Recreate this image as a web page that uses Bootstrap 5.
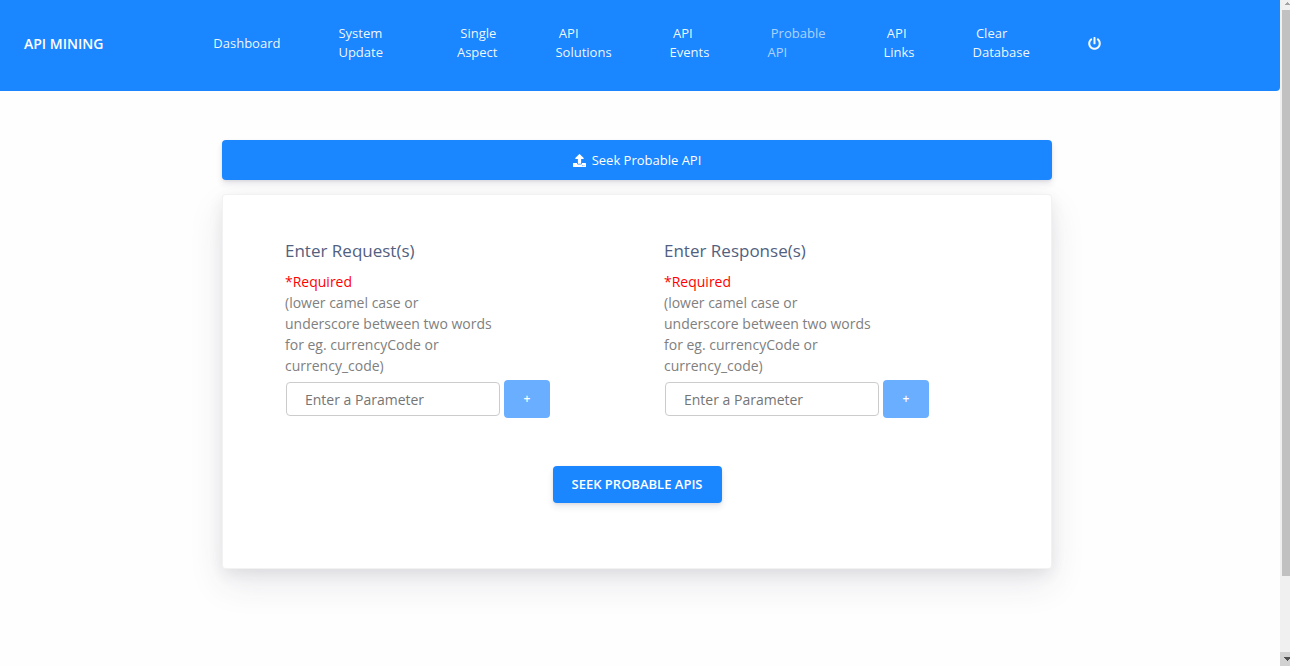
<!DOCTYPE html>
<html lang="en">
<head>
<meta charset="utf-8">
<meta name="viewport" content="width=device-width, initial-scale=1">
<title>API Mining</title>
<link href="https://cdn.jsdelivr.net/npm/bootstrap@5.3.0/dist/css/bootstrap.min.css" rel="stylesheet">
<style>
  :root { --brand-blue: #1a86ff; }
  body { font-family: "Open Sans", sans-serif; font-size: 14px; line-height: 21px; color: #808080; background: #fefefe; }
  .top-nav { --bs-navbar-nav-link-padding-x: 0; background: var(--brand-blue); border-bottom-right-radius: 4px; padding: 24px 24px 29px; }
  .top-nav .navbar-brand { font-size: 14px; line-height: 21px; font-weight: 600; color: #fff; margin-right: 110px; padding: 0; }
  .top-nav .navbar-nav { gap: 58px; }
  .top-nav .navbar-nav .nav-link { font-size: 13px; line-height: 19px; color: rgba(255,255,255,.95); padding: 0; white-space: nowrap; }
  .top-nav .navbar-nav .nav-link.active { color: rgba(255,255,255,.65); }
  .page-body { padding: 49px 6px 40px 0; }
  .panel-width { max-width: 830px; }
  .seek-tab { background: var(--brand-blue); color: #fff; font-size: 13px; line-height: 18px; padding: 11px; border-radius: 4px; gap: 6px; box-shadow: 0 4px 6px rgba(50,50,93,.11), 0 1px 3px rgba(0,0,0,.08); }
  .seek-tab:hover { color: #fff; }
  .form-panel { margin-top: 14px; padding: 43px 62px 65px; background: #fff; border: 1px solid rgba(0,0,0,.05); border-radius: 4px; box-shadow: 0 15px 35px rgba(50,50,93,.1), 0 5px 15px rgba(0,0,0,.07); }
  .param-grid { display: grid; grid-template-columns: repeat(2, minmax(0, 1fr)); column-gap: 54px; }
  .param-grid h2 { font-size: 17px; line-height: 26px; font-weight: 400; color: #525f7f; margin-bottom: 7px; }
  .param-hint { max-width: 216px; }
  .required-note { color: #f00; }
  .param-row { gap: 4px; margin: 4px 0 0 1px; }
  .param-row .form-control { width: 214px; height: 34px; font-size: 14px; padding: 4px 18px; border: 1px solid #ccc; border-radius: 4px; }
  .param-row .form-control::placeholder { color: #757575; }
  .add-btn { width: 46px; height: 38px; padding: 0; font-size: 12px; font-weight: 600; border: 0; border-radius: 4px; }
  .add-btn:disabled { background: #6aaeff; color: #fff; opacity: 1; }
  .submit-btn { margin-top: 48px; padding: 9px 19px; background: var(--brand-blue); color: #fff; font-size: 13px; line-height: 19px; font-weight: 600; border: 0; border-radius: 4px; box-shadow: 0 4px 6px rgba(50,50,93,.11), 0 1px 3px rgba(0,0,0,.08); }
  .scroll-strip { width: 10px; background: #f0f0f0; overflow: hidden; }
  .scroll-thumb { flex: 0 0 85%; margin-left: 2px; background: #c1c1c1; }
  .scroll-end { height: 14px; background: #d2d2d2; }
  .scroll-strip svg { display: block; }
</style>
</head>
<body>
<div class="d-flex vh-100 overflow-hidden">
  <div class="flex-grow-1">
    <nav class="navbar navbar-expand top-nav" aria-label="Main">
      <a class="navbar-brand" href="#">API MINING</a>
      <ul class="navbar-nav align-items-center">
        <li><a class="nav-link" href="#">Dashboard</a></li>
        <li class="me-3"><a class="nav-link" href="#">System<br>Update</a></li>
        <li><a class="nav-link" href="#">&nbsp;Single<br>Aspect</a></li>
        <li><a class="nav-link" href="#">&nbsp;API<br>Solutions</a></li>
        <li><a class="nav-link" href="#">&nbsp;API<br>Events</a></li>
        <li><a class="nav-link active" href="#" aria-current="page">&nbsp;Probable<br>API</a></li>
        <li><a class="nav-link" href="#">&nbsp;API<br>Links</a></li>
        <li><a class="nav-link" href="#">&nbsp;Clear<br>Database</a></li>
        <li><a class="nav-link d-flex" href="#" aria-label="Log out"><svg width="13" height="13" viewBox="0 0 512 512" fill="currentColor" aria-hidden="true"><path d="M400 54.1c63 45 104 118.6 104 201.9 0 136.8-110.8 247.7-247.5 248C120 504.3 8.2 393 8 256.4 7.9 173.1 48.9 99.3 111.8 54.2c11.7-8.3 28-4.8 35 7.7L162.6 90c5.9 10.5 3.1 23.8-6.6 31-41.5 30.8-68 79.6-68 134.9-.1 92.3 74.5 168.1 168 168.1 91.6 0 168.6-74.2 168-169.1-.3-51.8-24.7-101.8-68.1-134-9.7-7.2-12.4-20.5-6.5-30.9l15.8-28.1c7-12.4 23.2-16.1 34.800-7.800zM296 264V24c0-13.300-10.700-24-24-24h-32c-13.300 0-24 10.700-24 24v240c0 13.300 10.700 24 24 24h32c13.300 0 24-10.700 24-24z"/></svg></a></li>
      </ul>
    </nav>

    <main class="page-body">
      <div class="panel-width mx-auto">
        <a class="seek-tab d-flex justify-content-center align-items-center text-decoration-none" href="#seek">
          <svg width="13" height="13" viewBox="0 0 512 512" fill="currentColor" aria-hidden="true"><path d="M296 384h-80c-13.300 0-24-10.700-24-24V192h-87.700c-17.800 0-26.700-21.500-14.100-34.100L242.300 5.700c7.500-7.500 19.800-7.500 27.300 0l152.200 152.200c12.600 12.600 3.700 34.100-14.100 34.100H320v168c0 13.300-10.700 24-24 24zm216-8v112c0 13.300-10.700 24-24 24H24c-13.300 0-24-10.700-24-24V376c0-13.300 10.700-24 24-24h136v8c0 30.900 25.100 56 56 56h80c30.900 0 56-25.100 56-56v-8h136c13.300 0 24 10.700 24 24zm-124 88c0-11-9-20-20-20s-20 9-20 20 9 20 20 20 20-9 20-20zm64 0c0-11-9-20-20-20s-20 9-20 20 9 20 20 20 20-9 20-20z"/></svg>
          Seek Probable API
        </a>
        <form id="seek" class="form-panel">
          <div class="param-grid">
            <section>
              <h2><label for="request">Enter Request(s)</label></h2>
              <div class="param-hint"><span class="required-note">*Required</span><br>(lower camel case or<br>underscore between two words for eg. currencyCode or currency_code)</div>
              <div class="param-row d-flex align-items-center">
                <input type="text" class="form-control" id="request" placeholder="Enter a Parameter">
                <button type="button" class="btn add-btn" disabled>+</button>
              </div>
            </section>
            <section>
              <h2><label for="response">Enter Response(s)</label></h2>
              <div class="param-hint"><span class="required-note">*Required</span><br>(lower camel case or<br>underscore between two words for eg. currencyCode or currency_code)</div>
              <div class="param-row d-flex align-items-center">
                <input type="text" class="form-control" id="response" placeholder="Enter a Parameter">
                <button type="button" class="btn add-btn" disabled>+</button>
              </div>
            </section>
          </div>
          <div class="text-center">
            <button type="button" class="btn submit-btn">SEEK PROBABLE APIS</button>
          </div>
        </form>
      </div>
    </main>
  </div>

  <div class="scroll-strip d-flex flex-column flex-shrink-0" aria-hidden="true">
    <svg width="10" height="10"><path d="M4 5h1V4h1V3h1V2h1v1h1v1h1v1z" fill="#a3a3a3"/></svg>
    <div class="scroll-thumb"></div>
    <div class="scroll-end mt-auto"><svg width="10" height="14"><path d="M4 5h6v2H9v1H8v1H7V8H6V7H5V6H4z" fill="#505050"/></svg></div>
  </div>
</div>
<script src="https://cdn.jsdelivr.net/npm/bootstrap@5.3.0/dist/js/bootstrap.bundle.min.js"></script>
</body>
</html>
